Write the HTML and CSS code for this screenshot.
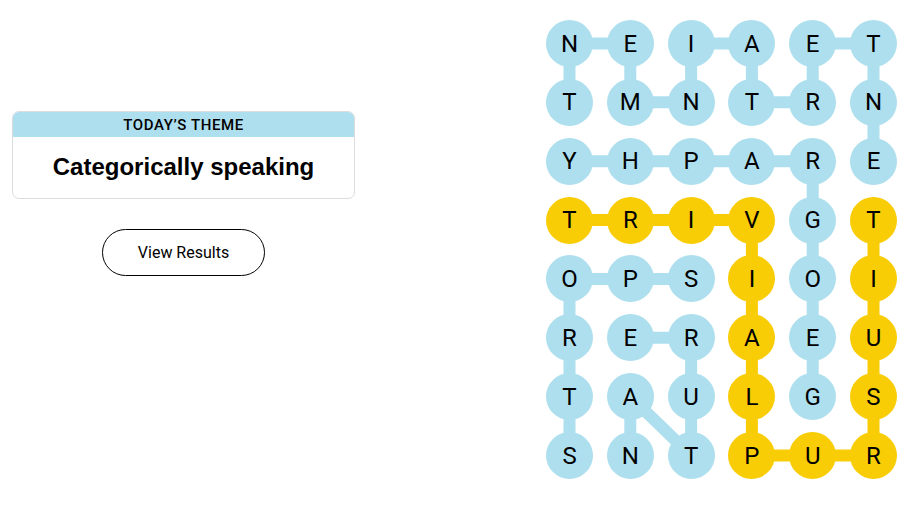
FILE: index.html
```html
<!DOCTYPE html>
<html lang="en">
<head>
  <meta charset="UTF-8">
  <meta name="viewport" content="width=device-width, initial-scale=1.0">
  <title>Strands</title>
  <link rel="stylesheet" href="styles.css">
</head>
<body>
  <section class="theme-panel">
    <div class="theme-card">
      <h3 class="theme-label">Today’s Theme</h3>
      <h2 class="theme-title">Categorically speaking</h2>
    </div>
    <button type="button" class="results-btn">View Results</button>
  </section>

  <section class="board">
    <svg class="links" width="351" height="459" viewBox="0 0 351 459">
      <g class="link-blue">
        <line x1="23.5" y1="23.5" x2="84.3" y2="23.5"/>
        <line x1="145.1" y1="23.5" x2="205.9" y2="23.5"/>
        <line x1="266.7" y1="23.5" x2="327.5" y2="23.5"/>
        <line x1="23.5" y1="23.5" x2="23.5" y2="82.36"/>
        <line x1="84.3" y1="23.5" x2="84.3" y2="82.36"/>
        <line x1="145.1" y1="23.5" x2="145.1" y2="82.36"/>
        <line x1="205.9" y1="23.5" x2="205.9" y2="82.36"/>
        <line x1="266.7" y1="23.5" x2="266.7" y2="82.36"/>
        <line x1="327.5" y1="23.5" x2="327.5" y2="141.22"/>
        <line x1="84.3" y1="82.36" x2="145.1" y2="82.36"/>
        <line x1="205.9" y1="82.36" x2="266.7" y2="82.36"/>
        <line x1="23.5" y1="141.22" x2="266.7" y2="141.22"/>
        <line x1="266.7" y1="141.22" x2="266.7" y2="376.66"/>
        <line x1="23.5" y1="258.94" x2="145.1" y2="258.94"/>
        <line x1="23.5" y1="258.94" x2="23.5" y2="435.52"/>
        <line x1="84.3" y1="317.8" x2="145.1" y2="317.8"/>
        <line x1="145.1" y1="317.8" x2="145.1" y2="435.52"/>
        <line x1="84.3" y1="376.66" x2="84.3" y2="435.52"/>
        <line x1="84.3" y1="376.66" x2="145.1" y2="435.52"/>
      </g>
      <g class="link-gold">
        <line x1="23.5" y1="200.08" x2="205.9" y2="200.08"/>
        <line x1="205.9" y1="200.08" x2="205.9" y2="435.52"/>
        <line x1="205.9" y1="435.52" x2="327.5" y2="435.52"/>
        <line x1="327.5" y1="200.08" x2="327.5" y2="435.52"/>
      </g>
    </svg>
    <div class="grid">
      <span class="cell">N</span><span class="cell">E</span><span class="cell">I</span><span class="cell">A</span><span class="cell">E</span><span class="cell">T</span>
      <span class="cell">T</span><span class="cell">M</span><span class="cell">N</span><span class="cell">T</span><span class="cell">R</span><span class="cell">N</span>
      <span class="cell">Y</span><span class="cell">H</span><span class="cell">P</span><span class="cell">A</span><span class="cell">R</span><span class="cell">E</span>
      <span class="cell gold">T</span><span class="cell gold">R</span><span class="cell gold">I</span><span class="cell gold">V</span><span class="cell">G</span><span class="cell gold">T</span>
      <span class="cell">O</span><span class="cell">P</span><span class="cell">S</span><span class="cell gold">I</span><span class="cell">O</span><span class="cell gold">I</span>
      <span class="cell">R</span><span class="cell">E</span><span class="cell">R</span><span class="cell gold">A</span><span class="cell">E</span><span class="cell gold">U</span>
      <span class="cell">T</span><span class="cell">A</span><span class="cell">U</span><span class="cell gold">L</span><span class="cell">G</span><span class="cell gold">S</span>
      <span class="cell">S</span><span class="cell">N</span><span class="cell">T</span><span class="cell gold">P</span><span class="cell gold">U</span><span class="cell gold">R</span>
    </div>
  </section>
</body>
</html>
```

FILE: styles.css
```css
body {
  font-family: Roboto, 'Liberation Sans', sans-serif;
  background-color: #ffffff;
  color: #000;
  margin: 0;
  padding: 20px 16px 0 12px;
  display: flex;
  align-items: flex-start;
  justify-content: space-between;
}
.theme-panel {
  width: 343px;
  padding-top: 91px;
  display: flex;
  flex-direction: column;
  align-items: center;
}
.theme-card {
  width: 100%;
  box-sizing: border-box;
  border: 1px solid #dcdcdc;
  border-radius: 7px;
  overflow: hidden;
  text-align: center;
}
.theme-label {
  margin: 0;
  height: 25px;
  line-height: 26px;
  background-color: #aedfee;
  font-size: 15px;
  font-weight: 500;
  letter-spacing: 0.6px;
  text-transform: uppercase;
}
.theme-title {
  margin: 0;
  height: 61px;
  line-height: 60px;
  font-family: 'Liberation Sans', Arial, sans-serif;
  font-size: 24px;
  font-weight: 700;
}
.results-btn {
  margin-top: 30px;
  width: 163px;
  height: 47px;
  border: 1px solid #000;
  border-radius: 24px;
  background-color: #fff;
  font-family: inherit;
  font-size: 16px;
  color: #000;
  cursor: pointer;
}
.board {
  position: relative;
  width: 351px;
  height: 459px;
}
.links {
  position: absolute;
  top: 0;
  left: 0;
}
.links line {
  stroke-width: 12;
}
.link-blue {
  stroke: #aedfee;
}
.link-gold {
  stroke: #f8cd05;
}
.grid {
  position: relative;
  display: grid;
  grid-template-columns: repeat(6, 47px);
  grid-auto-rows: 47px;
  column-gap: 13.8px;
  row-gap: 11.86px;
}
.cell {
  display: flex;
  align-items: center;
  justify-content: center;
  border-radius: 50%;
  background-color: #aedfee;
  font-size: 24px;
  font-weight: 400;
}
.cell.gold {
  background-color: #f8cd05;
}
```
